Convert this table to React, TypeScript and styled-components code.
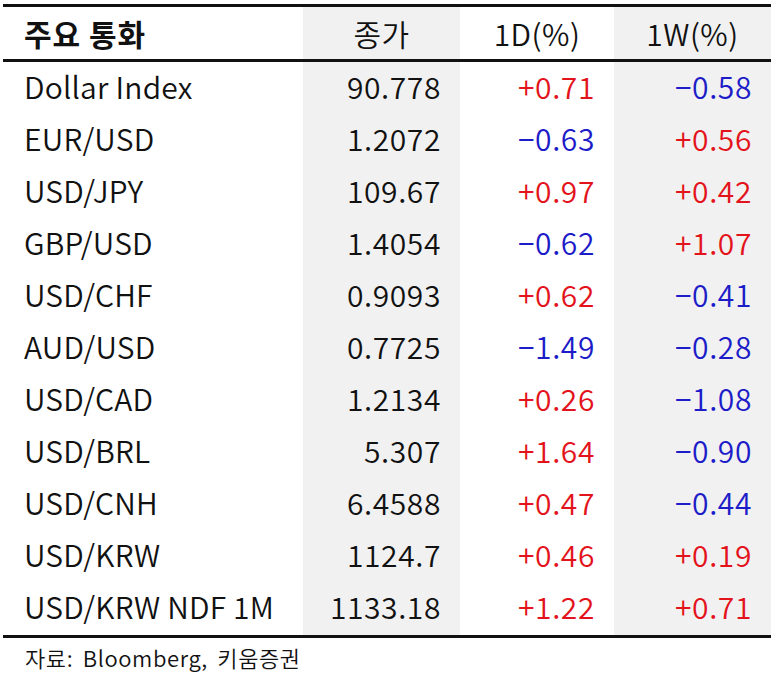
import React from "react";
import styled, { createGlobalStyle } from "styled-components";

const Global = createGlobalStyle`
  html, body { margin: 0; padding: 0; background: #fff; }
  body { font-family: "Noto Sans CJK KR", "Noto Sans", sans-serif; color: #111; }
`;

const Page = styled.div`
  padding: 4px 2px 0 3px;
  width: 768px;
`;

const Table = styled.div`
  display: grid;
  grid-template-columns: 300px 157px 154px 157px;
  border-top: 3px solid #111;
  border-bottom: 3px solid #111;
`;

const HeadCell = styled.div<{ $shade?: boolean; $first?: boolean }>`
  height: 55px;
  box-sizing: border-box;
  padding-bottom: 1px;
  display: flex;
  align-items: center;
  justify-content: ${(p) => (p.$first ? "flex-start" : "center")};
  padding-left: ${(p) => (p.$first ? "21px" : "0")};
  background: ${(p) => (p.$shade ? "#f1f1f1" : "#fff")};
  border-bottom: 3px solid #111;
  font-size: 30px;
  font-weight: ${(p) => (p.$first ? 700 : 350)};
  letter-spacing: ${(p) => (p.$first ? "1px" : "0.5px")};
  color: #111;
`;

const NameCell = styled.div`
  height: 52.1px;
  box-sizing: border-box;
  padding-bottom: 5px;
  display: flex;
  align-items: center;
  padding-left: 21px;
  font-size: 30px;
  font-weight: 350;
  letter-spacing: 0.2px;
  color: #111;
`;

const ValueCell = styled.div<{ $shade?: boolean; $tone?: "up" | "down" | "plain" }>`
  height: 52.1px;
  box-sizing: border-box;
  padding-bottom: 5px;
  display: flex;
  align-items: center;
  justify-content: flex-end;
  padding-right: 19px;
  background: ${(p) => (p.$shade ? "#f1f1f1" : "#fff")};
  font-size: 30px;
  font-weight: 350;
  letter-spacing: 0.6px;
  color: ${(p) => (p.$tone === "up" ? "#e3131b" : p.$tone === "down" ? "#1c1cc8" : "#111")};
`;

const Source = styled.div`
  padding: 3px 0 0 22px;
  font-size: 22px;
  font-weight: 350;
  letter-spacing: 0.6px;
  word-spacing: 4px;
  color: #111;
`;

type Row = [string, string, string, string];

const rows: Row[] = [
  ["Dollar Index", "90.778", "+0.71", "−0.58"],
  ["EUR/USD", "1.2072", "−0.63", "+0.56"],
  ["USD/JPY", "109.67", "+0.97", "+0.42"],
  ["GBP/USD", "1.4054", "−0.62", "+1.07"],
  ["USD/CHF", "0.9093", "+0.62", "−0.41"],
  ["AUD/USD", "0.7725", "−1.49", "−0.28"],
  ["USD/CAD", "1.2134", "+0.26", "−1.08"],
  ["USD/BRL", "5.307", "+1.64", "−0.90"],
  ["USD/CNH", "6.4588", "+0.47", "−0.44"],
  ["USD/KRW", "1124.7", "+0.46", "+0.19"],
  ["USD/KRW NDF 1M", "1133.18", "+1.22", "+0.71"],
];

const tone = (v: string) => (v.startsWith("+") ? "up" : "down");

export default function App() {
  return (
    <Page>
      <Global />
      <Table>
        <HeadCell $first>주요 통화</HeadCell>
        <HeadCell $shade>종가</HeadCell>
        <HeadCell>1D(%)</HeadCell>
        <HeadCell $shade>1W(%)</HeadCell>
        {rows.map(([name, close, d, w]) => (
          <React.Fragment key={name}>
            <NameCell>{name}</NameCell>
            <ValueCell $shade $tone="plain">{close}</ValueCell>
            <ValueCell $tone={tone(d)}>{d}</ValueCell>
            <ValueCell $shade $tone={tone(w)}>{w}</ValueCell>
          </React.Fragment>
        ))}
      </Table>
      <Source>자료: Bloomberg, 키움증권</Source>
    </Page>
  );
}
